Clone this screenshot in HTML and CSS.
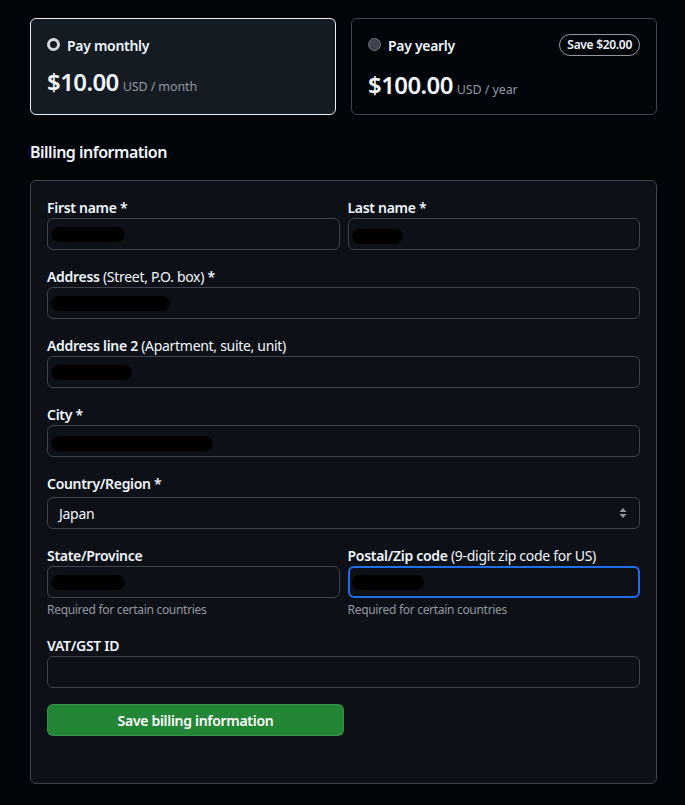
FILE: index.html
```html
<!DOCTYPE html>
<html lang="en">
<head>
<meta charset="utf-8">
<title>Billing</title>
<link rel="stylesheet" href="styles.css">
</head>
<body>
<div class="page">
  <div class="plans">
    <label class="plan plan-selected">
      <div class="plan-head">
        <span class="radio radio-checked"></span>
        <span class="plan-name">Pay monthly</span>
      </div>
      <div class="price"><span class="amount">$10.00</span><span class="unit">USD / month</span></div>
    </label>
    <label class="plan">
      <div class="plan-head">
        <span class="radio"></span>
        <span class="plan-name">Pay yearly</span>
        <span class="badge">Save $20.00</span>
      </div>
      <div class="price price-yearly"><span class="amount">$100.00</span><span class="unit">USD / year</span></div>
    </label>
  </div>

  <h2 class="section-title">Billing information</h2>

  <form class="billing">
    <div class="row two">
      <div class="field">
        <div class="label">First name *</div>
        <div class="input"><span class="redact" style="width:74px"></span></div>
      </div>
      <div class="field">
        <div class="label">Last name *</div>
        <div class="input"><span class="redact r-low" style="width:51px"></span></div>
      </div>
    </div>
    <div class="field">
      <div class="label">Address <span class="note">(Street, P.O. box)</span> *</div>
      <div class="input"><span class="redact" style="width:119px"></span></div>
    </div>
    <div class="field">
      <div class="label">Address line 2 <span class="note">(Apartment, suite, unit)</span></div>
      <div class="input"><span class="redact" style="width:81px"></span></div>
    </div>
    <div class="field">
      <div class="label">City *</div>
      <div class="input"><span class="redact r-low" style="width:162px"></span></div>
    </div>
    <div class="field">
      <div class="label">Country/Region *</div>
      <div class="input select">
        <span class="select-value">Japan</span>
        <svg class="select-arrows" width="8" height="12" viewBox="0 0 8 12"><path d="M4 1 L7.5 5 H0.5 Z M4 11 L7.5 7 H0.5 Z" fill="#9198a1"/></svg>
      </div>
    </div>
    <div class="row two">
      <div class="field">
        <div class="label">State/Province</div>
        <div class="input"><span class="redact" style="width:74px"></span></div>
        <div class="help">Required for certain countries</div>
      </div>
      <div class="field">
        <div class="label">Postal/Zip code <span class="note">(9-digit zip code for US)</span></div>
        <div class="input focused"><span class="redact" style="width:72px"></span></div>
        <div class="help">Required for certain countries</div>
      </div>
    </div>
    <div class="field vat">
      <div class="label">VAT/GST ID</div>
      <div class="input"></div>
    </div>
    <div class="actions">
      <button type="button" class="btn-save">Save billing information</button>
    </div>
  </form>
</div>
</body>
</html>
```

FILE: styles.css
```css
* { box-sizing: border-box; }
html, body { margin: 0; padding: 0; background: #010409; }
body {
  font-family: "Noto Sans", "Segoe UI", "Liberation Sans", sans-serif;
  font-size: 14px;
  letter-spacing: -0.3px;
  color: #f0f6fc;
}
.page {
  width: 685px;
  padding: 18px 28px 20px 30px;
}
.plans {
  display: grid;
  grid-template-columns: 1fr 1fr;
  gap: 15px;
}
.plan {
  display: flex;
  flex-direction: column;
  height: 97px;
  padding: 15px 16px 0 16px;
  border: 1px solid #3d444d;
  border-radius: 6px;
  background: #010409;
}
.plan-selected {
  background: #151b23;
  border-color: #e6edf3;
}
.plan-head {
  display: flex;
  align-items: center;
  height: 22px;
  gap: 7px;
}
.radio {
  width: 13px;
  height: 13px;
  border-radius: 50%;
  background: #3d444d;
  border: 1px solid #6e7681;
  flex: none;
  margin-top: -2px;
}
.radio-checked {
  background: #151b23;
  border: 3px solid #d1d7e0;
}
.plan-name {
  font-weight: 600;
  font-size: 14px;
}
.badge {
  margin-left: auto;
  font-size: 12px;
  font-weight: 600;
  line-height: 20px;
  padding: 0 7px;
  border: 1px solid #9198a1;
  border-radius: 999px;
}
.price {
  margin-top: 10px;
  display: flex;
  align-items: baseline;
  gap: 4px;
}
.price-yearly { margin-top: 13px; }
.amount {
  font-size: 24px;
  font-weight: 600;
  line-height: 32px;
  letter-spacing: -0.6px;
}
.unit {
  font-size: 12.5px;
  letter-spacing: -0.1px;
  color: #9198a1;
}
.section-title {
  margin: 25px 0 0 0;
  font-size: 16px;
  font-weight: 600;
  line-height: 24px;
  letter-spacing: -0.5px;
  color: #f0f6fc;
}
.billing {
  margin-top: 16px;
  width: 627px;
  border: 1px solid #3d444d;
  border-radius: 6px;
  background: #0d1117;
  padding: 17px 16px 47px 16px;
  display: flex;
  flex-direction: column;
  gap: 17px;
}
.row.two {
  display: grid;
  grid-template-columns: 1fr 1fr;
  gap: 8px;
}
.label {
  font-weight: 600;
  font-size: 14px;
  line-height: 20px;
}
.note { font-weight: 400; }
.input {
  height: 32px;
  border: 1px solid #3d444d;
  border-radius: 6px;
  background: #0d1117;
  display: flex;
  align-items: center;
  padding: 0 2px;
}
.input.focused {
  border: 2px solid #1f6feb;
  padding: 0 1px;
}
.redact {
  display: block;
  height: 15px;
  border-radius: 8px;
  background: #000;
  margin-left: 1px;
}
.r-low { margin-top: 5px; }
.select {
  margin-top: 3px;
  padding: 0 12px 0 11px;
  justify-content: space-between;
}
.select-value { font-size: 14px; color: #f0f6fc; }
.help {
  margin-top: 4px;
  font-size: 12px;
  line-height: 16px;
  color: #9198a1;
}
.vat { margin-top: 1px; }
.actions {
  display: flex;
  margin-top: -1px;
}
.btn-save {
  width: 297px;
  height: 32px;
  border: 1px solid rgba(240,246,252,0.1);
  border-radius: 6px;
  background: #238636;
  color: #ffffff;
  font-family: inherit;
  font-size: 14px;
  font-weight: 600;
  letter-spacing: -0.3px;
  padding: 0 16px;
}
```
